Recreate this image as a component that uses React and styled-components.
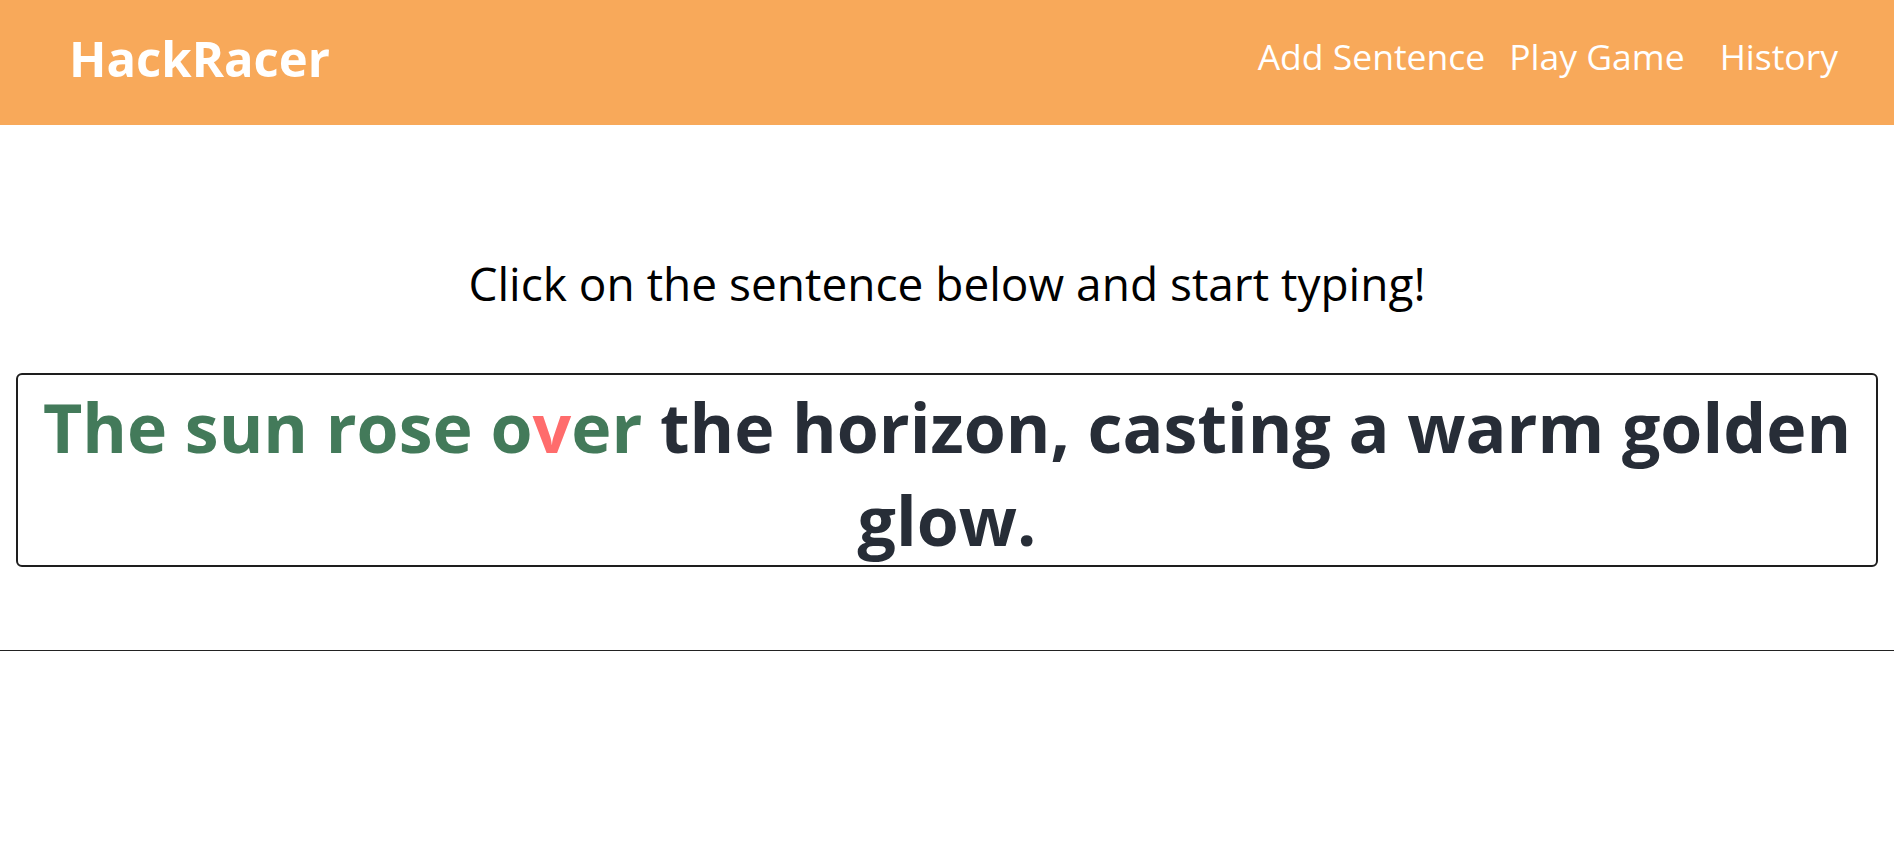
import React from 'react';
import styled, { createGlobalStyle } from 'styled-components';

const GlobalStyle = createGlobalStyle`
  body {
    margin: 0;
    font-family: "Open Sans", "Noto Sans", sans-serif;
    background: #fff;
    color: #000;
  }
`;

const Navbar = styled.nav`
  height: 125px;
  box-sizing: border-box;
  background: #f8a95a;
  display: flex;
  justify-content: space-between;
  align-items: flex-start;
  padding: 34px 56px 0 69px;
`;

const Brand = styled.a`
  font-size: 49px;
  line-height: 1;
  font-weight: 700;
  color: #fff;
  text-decoration: none;
`;

const NavLinks = styled.div`
  display: flex;
  margin-top: 5px;
`;

const NavLink = styled.a`
  font-size: 35.5px;
  line-height: 1;
  color: #fff;
  text-decoration: none;
  margin-left: ${(p) => p.$space ?? 24}px;
  cursor: pointer;
`;

const Main = styled.main`
  padding-top: 131px;
`;

const Prompt = styled.p`
  margin: 0 0 62px;
  text-align: center;
  font-size: 46px;
  line-height: 1.2;
`;

const SentenceBox = styled.div`
  margin: 0 16px;
  height: 194px;
  box-sizing: border-box;
  padding-top: 5px;
  border: 2px solid #1e1e1e;
  border-radius: 6px;
  text-align: center;
  font-size: 68px;
  line-height: 93px;
  font-weight: 700;
  color: #272d37;
  cursor: text;
`;

const Char = styled.span`
  color: ${(p) =>
    p.$status === 'correct' ? '#437a5a' : p.$status === 'wrong' ? '#ff6c6c' : '#272d37'};
`;

const Divider = styled.hr`
  margin: 83px 0 0;
  border: 0;
  border-top: 1px solid #222;
`;

const sentence = 'The sun rose over the horizon, casting a warm golden glow.';
const typed = 'The sun rose oXer';

export default function App() {
  return (
    <>
      <GlobalStyle />
      <Navbar>
        <Brand href="#">HackRacer</Brand>
        <NavLinks>
          <NavLink $space={0}>Add Sentence</NavLink>
          <NavLink>Play Game</NavLink>
          <NavLink $space={35}>History</NavLink>
        </NavLinks>
      </Navbar>
      <Main>
        <Prompt>Click on the sentence below and start typing!</Prompt>
        <SentenceBox tabIndex={0}>
          {sentence.split('').map((ch, i) => {
            let status = 'pending';
            if (i < typed.length) status = typed[i] === ch ? 'correct' : 'wrong';
            return (
              <Char key={i} $status={status}>
                {ch}
              </Char>
            );
          })}
        </SentenceBox>
        <Divider />
      </Main>
    </>
  );
}
